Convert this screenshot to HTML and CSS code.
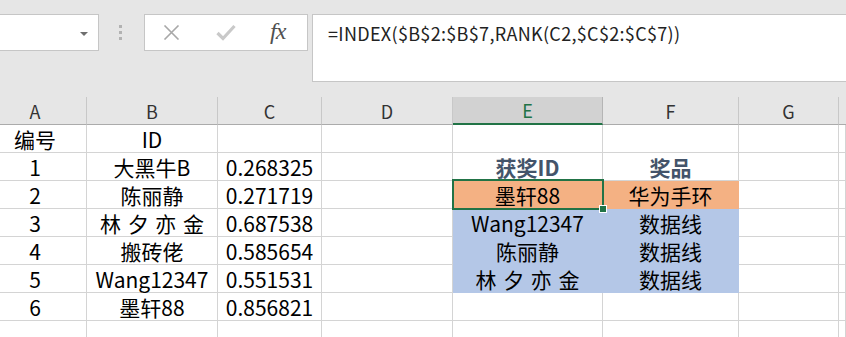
FILE: index.html
```html
<!DOCTYPE html>
<html lang="zh-CN">
<head>
    <meta charset="UTF-8">
    <title>RANK 抽奖</title>
    <link rel="stylesheet" href="styles.css">
</head>
<body>
    <!-- Formula bar -->
    <div class="topbar">
        <div class="name-box"><span class="drop-arrow"></span></div>
        <div class="grip"><i></i><i></i><i></i></div>
        <div class="fx-box">
            <svg class="ico-cancel" width="17" height="15" viewBox="0 0 17 15">
                <path d="M1.5 0.5 L15.5 14.5 M15.5 0.5 L1.5 14.5" stroke="#a8a8a8" stroke-width="1.6" fill="none"/>
            </svg>
            <svg class="ico-enter" width="20" height="17" viewBox="0 0 20 17">
                <path d="M1.5 9 L7 14.5 L18.5 2" stroke="#c9c9c9" stroke-width="3.2" fill="none"/>
            </svg>
            <span class="fx">fx</span>
        </div>
        <div class="formula">=INDEX($B$2:$B$7,RANK(C2,$C$2:$C$7))</div>
    </div>

    <!-- Sheet -->
    <div class="sheet">
        <div class="col-head">A</div>
        <div class="col-head">B</div>
        <div class="col-head">C</div>
        <div class="col-head">D</div>
        <div class="col-head active">E</div>
        <div class="col-head">F</div>
        <div class="col-head">G</div>
        <div class="col-head last"></div>

        <div class="cell">编号</div>
        <div class="cell">ID</div>
        <div class="cell"></div>
        <div class="cell"></div>
        <div class="cell"></div>
        <div class="cell"></div>
        <div class="cell"></div>
        <div class="cell"></div>

        <div class="cell">1</div>
        <div class="cell">大黑牛B</div>
        <div class="cell">0.268325</div>
        <div class="cell"></div>
        <div class="cell title">获奖ID</div>
        <div class="cell title">奖品</div>
        <div class="cell"></div>
        <div class="cell"></div>

        <div class="cell">2</div>
        <div class="cell">陈丽静</div>
        <div class="cell">0.271719</div>
        <div class="cell"></div>
        <div class="cell orange selected">墨轩88</div>
        <div class="cell orange">华为手环</div>
        <div class="cell"></div>
        <div class="cell"></div>

        <div class="cell">3</div>
        <div class="cell">林 夕 亦 金</div>
        <div class="cell">0.687538</div>
        <div class="cell"></div>
        <div class="cell blue">Wang12347</div>
        <div class="cell blue">数据线</div>
        <div class="cell"></div>
        <div class="cell"></div>

        <div class="cell">4</div>
        <div class="cell">搬砖佬</div>
        <div class="cell">0.585654</div>
        <div class="cell"></div>
        <div class="cell blue">陈丽静</div>
        <div class="cell blue">数据线</div>
        <div class="cell"></div>
        <div class="cell"></div>

        <div class="cell">5</div>
        <div class="cell">Wang12347</div>
        <div class="cell">0.551531</div>
        <div class="cell"></div>
        <div class="cell blue">林 夕 亦 金</div>
        <div class="cell blue">数据线</div>
        <div class="cell"></div>
        <div class="cell"></div>

        <div class="cell">6</div>
        <div class="cell">墨轩88</div>
        <div class="cell">0.856821</div>
        <div class="cell"></div>
        <div class="cell"></div>
        <div class="cell"></div>
        <div class="cell"></div>
        <div class="cell"></div>

        <div class="cell"></div>
        <div class="cell"></div>
        <div class="cell"></div>
        <div class="cell"></div>
        <div class="cell"></div>
        <div class="cell"></div>
        <div class="cell"></div>
        <div class="cell"></div>
    </div>
</body>
</html>
```

FILE: styles.css
```css
/* ===== Page ===== */
body {
    margin: 0;
    padding: 0;
    background: #ffffff;
    font-family: "Noto Sans CJK SC", "Noto Sans", sans-serif;
    color: #000;
    overflow: hidden;
}

/* ===== Formula Bar ===== */
.topbar {
    display: flex;
    align-items: flex-start;
    height: 97px;
    padding-top: 14px;
    box-sizing: border-box;
    background: #e6e6e6;
}

.name-box {
    width: 109px;
    height: 37px;
    margin-left: -10px;
    box-sizing: border-box;
    background: #fff;
    border: 1px solid #c6c6c6;
    display: flex;
    align-items: center;
    justify-content: flex-end;
    padding-right: 10px;
}

.drop-arrow {
    width: 0;
    height: 0;
    border-left: 4px solid transparent;
    border-right: 4px solid transparent;
    border-top: 4px solid #6f6f6f;
    margin-top: 2px;
}

.grip {
    height: 37px;
    margin-left: 20px;
    display: flex;
    flex-direction: column;
    justify-content: center;
    gap: 3px;
}

.grip i {
    display: block;
    width: 3px;
    height: 3px;
    background: #b2b2b2;
}

.fx-box {
    width: 164px;
    height: 37px;
    margin-left: 22px;
    box-sizing: border-box;
    background: #fff;
    border: 1px solid #c6c6c6;
    display: flex;
    align-items: center;
    padding-left: 18px;
}

.ico-enter {
    margin-left: 36px;
}

.fx {
    margin-left: 34px;
    font-family: "Liberation Serif", serif;
    font-style: italic;
    font-size: 24px;
    color: #505050;
    letter-spacing: -1px;
    margin-top: -3px;
}

.formula {
    flex: 1;
    height: 68px;
    margin-left: 4px;
    margin-right: -10px;
    box-sizing: border-box;
    background: #fff;
    border: 1px solid #c6c6c6;
    padding: 6px 0 0 15px;
    font-size: 18px;
    line-height: 24px;
    letter-spacing: 0.32px;
    color: #222;
}

/* ===== Worksheet Grid ===== */
.sheet {
    display: grid;
    grid-template-columns: 103px 131px 104px 131px 150px 136px 100px 1fr;
    grid-auto-rows: 28px;
    margin-left: -16px;
}

.col-head {
    background: #e6e6e6;
    border-right: 1px solid #c8c8c8;
    border-bottom: 1px solid #ababab;
    box-sizing: border-box;
    display: flex;
    align-items: center;
    justify-content: center;
    font-size: 18px;
    color: #333;
}

.col-head.last {
    border-right: none;
}

/* selected column header */
.col-head.active {
    background: #d2d2d2;
    color: #217346;
    border-bottom: 2px solid #217346;
    border-right-color: #b5b5b5;
}

.cell {
    border-right: 1px solid #d4d4d4;
    border-bottom: 1px solid #d4d4d4;
    box-sizing: border-box;
    display: flex;
    align-items: flex-end;
    justify-content: center;
    font-size: 21px;
    line-height: 26px;
    word-spacing: 2px;
    white-space: nowrap;
    position: relative;
}

.cell.title {
    font-weight: bold;
    color: #44546a;
}

.cell.orange {
    background: #f4b183;
    border-color: #f4b183;
}

.cell.blue {
    background: #b4c7e7;
    border-color: #b4c7e7;
}

/* active cell outline with fill handle */
.cell.selected {
    z-index: 2;
}

.cell.selected::before {
    content: "";
    position: absolute;
    top: -2px;
    left: -1px;
    right: -2px;
    bottom: -2px;
    border: 2px solid #217346;
}

.cell.selected::after {
    content: "";
    position: absolute;
    right: -5px;
    bottom: -5px;
    width: 6px;
    height: 6px;
    background: #217346;
    border: 1px solid #fff;
}
```
